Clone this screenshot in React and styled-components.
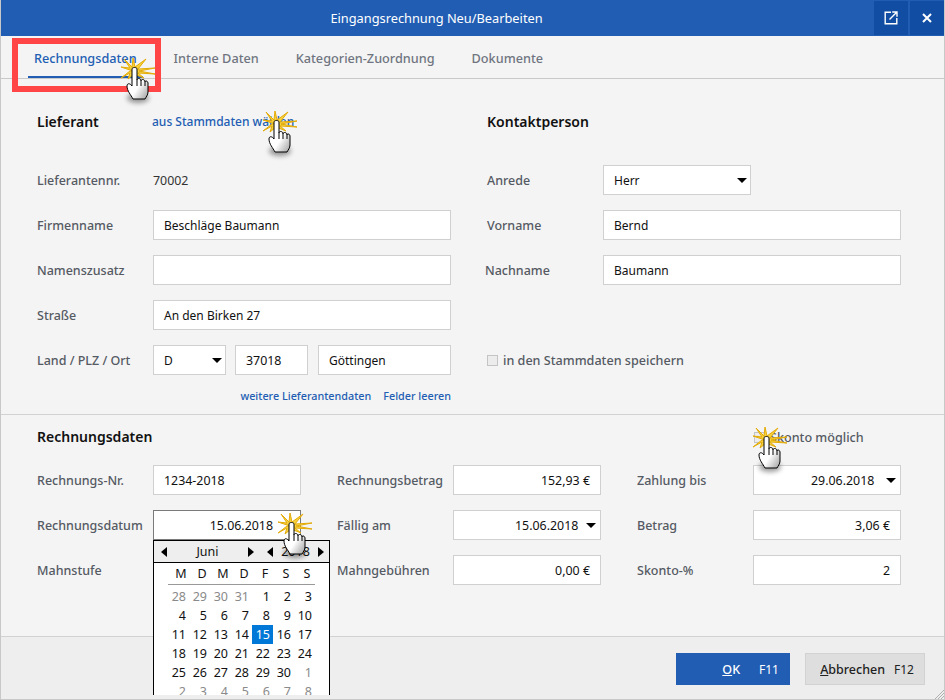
import React from 'react';
import styled, { createGlobalStyle } from 'styled-components';

const GlobalStyle = createGlobalStyle`
  html, body {
    margin: 0;
    padding: 0;
    background: #f4f4f4;
  }
  * {
    box-sizing: border-box;
  }
`;

const Window = styled.div`
  position: relative;
  width: 945px;
  height: 700px;
  overflow: hidden;
  display: flex;
  flex-direction: column;
  background: #f4f4f4;
  border-left: 1px solid #c8c8c8;
  border-right: 1px solid #c8c8c8;
  border-bottom: 1px solid #c8c8c8;
  font-family: "Noto Sans", "Open Sans", sans-serif;
  font-size: 12.5px;
  color: #1a1a1a;
`;

const TitleBar = styled.div`
  height: 36px;
  margin: 0 -1px;
  padding-right: 72px;
  flex: none;
  display: flex;
  align-items: center;
  justify-content: center;
  position: relative;
  background: #215db3;
  color: #fff;
  font-size: 12.8px;
`;

const TitleButtons = styled.div`
  position: absolute;
  right: 1px;
  top: 1px;
  display: flex;
  gap: 2px;
`;

const TitleButton = styled.div`
  width: 34px;
  height: 34px;
  display: flex;
  align-items: center;
  justify-content: center;
  background: #114ea3;
`;

const TabBar = styled.div`
  height: 43px;
  flex: none;
  display: flex;
  padding-left: 27px;
  gap: 25px;
  border-bottom: 1px solid #c9c9c9;
`;

const Tab = styled.div`
  height: 42px;
  padding: 13px 6px 0;
  margin-bottom: -1px;
  font-size: 12.7px;
  font-weight: 500;
  color: ${props => (props.$active ? '#215db3' : '#6f7480')};
  border-bottom: 2px solid ${props => (props.$active ? '#215db3' : 'transparent')};
`;

const TopSection = styled.div`
  height: 336px;
  flex: none;
  padding: 26px 0 0 36px;
  display: grid;
  grid-template-columns: 414px 414px;
  column-gap: 36px;
  border-bottom: 1px solid #d2d2d2;
`;

const FormColumn = styled.div`
  display: flex;
  flex-direction: column;
`;

const HeadingRow = styled.div`
  height: 32px;
  margin-bottom: 28px;
  display: flex;
  align-items: center;
`;

const Heading = styled.div`
  width: 115px;
  font-size: 14px;
  font-weight: 600;
  color: #111;
`;

const Row = styled.div`
  height: 30px;
  margin-bottom: 15px;
  display: flex;
  align-items: center;
`;

const Label = styled.div`
  width: ${props => 116 - (props.$shift || 0)}px;
  flex: none;
  color: #555a63;
  font-weight: 500;
  margin-left: ${props => props.$shift || 0}px;
  white-space: nowrap;
`;

const PlainValue = styled.div`
  color: #333;
  font-size: 12.4px;
`;

const TextLink = styled.div`
  color: #215db3;
  font-size: ${props => (props.$small ? '10.8px' : '12px')};
  font-weight: 500;
  white-space: nowrap;
`;

const Field = styled.div`
  width: ${props => props.$width || 148}px;
  height: 30px;
  flex: none;
  margin-right: ${props => props.$gap || 0}px;
  padding: 0 ${props => props.$padRight || 10}px 0 10px;
  display: flex;
  align-items: center;
  justify-content: ${props => (props.$right ? 'flex-end' : 'flex-start')};
  background: #fff;
  border: 1px solid ${props => (props.$focus ? '#7a7a7a' : '#d0d0d0')};
  color: #111;
  font-size: ${props => (props.$num ? '12.4px' : '12px')};
  white-space: nowrap;
`;

const Arrow = styled.span`
  width: 0;
  height: 0;
  margin-left: auto;
  border-left: 5px solid transparent;
  border-right: 5px solid transparent;
  border-top: 5px solid #000;
`;

const SelectValue = styled.span`
  margin-left: ${props => (props.$indent ? `${props.$indent}px` : 0)};
`;

const LinkRow = styled.div`
  display: flex;
  justify-content: flex-end;
  align-items: center;
  gap: 12px;
  margin-top: -2px;
`;

const CheckRow = styled.div`
  height: 30px;
  display: flex;
  align-items: center;
  gap: 5px;
  color: #555a63;
  font-size: 12.6px;
  font-weight: 500;
`;

const CheckBox = styled.span`
  width: 11px;
  height: 11px;
  background: #ececec;
  border: 1px solid #c4c4c4;
`;

const InvoiceSection = styled.div`
  height: 221px;
  flex: none;
  padding: 8px 0 0 36px;
`;

const InvoiceHead = styled.div`
  height: 26px;
  margin-bottom: 16px;
  display: flex;
  align-items: center;
  justify-content: space-between;
`;

const SkontoCheck = styled(CheckRow)`
  width: 148px;
  margin-right: 43px;
  margin-top: 2px;
  padding-left: 1px;
`;

const InvoiceGrid = styled.div`
  display: grid;
  grid-template-columns: 264px 264px 264px;
  column-gap: 36px;
`;

const Footer = styled.div`
  flex: 1;
  display: flex;
  align-items: flex-start;
  justify-content: flex-end;
  gap: 15px;
  padding: 16px 19px 0 0;
  background: #eeeeee;
  border-top: 1px solid #d2d2d2;
`;

const OkButton = styled.div`
  width: 114px;
  height: 32px;
  display: flex;
  align-items: center;
  justify-content: flex-end;
  gap: 19px;
  padding-right: 11px;
  background: #215db3;
  color: #fff;
  font-size: 12.5px;
  font-weight: 500;
`;

const CancelButton = styled.div`
  width: 120px;
  height: 32px;
  display: flex;
  align-items: center;
  justify-content: flex-end;
  gap: 9px;
  padding-right: 10px;
  background: #dedede;
  border: 1px solid #d2d2d2;
  color: #222;
  font-size: 12.5px;
  font-weight: 500;
`;

const Hotkey = styled.span`
  font-size: 12px;
  font-weight: 400;
`;

const ResizeGrip = styled.svg`
  position: absolute;
  right: 0;
  bottom: 0;
`;

const Calendar = styled.div`
  position: absolute;
  left: 152px;
  top: 540px;
  width: 177px;
  height: 155px;
  overflow: hidden;
  background: #fff;
  border: 1px solid #000;
  border-bottom: none;
  color: #111;
  font-size: 12.5px;
`;

const CalendarHead = styled.div`
  height: 22px;
  display: flex;
  align-items: center;
  padding-left: 7px;
  background: #eeeeee;
  border-bottom: 1px solid #000;
`;

const HeadText = styled.span`
  width: ${props => props.$width}px;
  text-align: center;
`;

const NavArrow = styled.span`
  width: 0;
  height: 0;
  margin-left: ${props => props.$offset || 0}px;
  border-top: 5px solid transparent;
  border-bottom: 5px solid transparent;
  border-left: ${props => (props.$dir === 'right' ? '6px solid #000' : 'none')};
  border-right: ${props => (props.$dir === 'left' ? '6px solid #000' : 'none')};
`;

const Weekdays = styled.div`
  margin: 0 14px;
  height: 22px;
  display: grid;
  grid-template-columns: repeat(7, 21px);
  align-items: center;
  border-bottom: 1px solid #999;
`;

const WeekdayCell = styled.span`
  padding-left: 5px;
  text-align: center;
`;

const DayGrid = styled.div`
  margin: 2px 14px 0;
  display: grid;
  grid-template-columns: repeat(7, 21px);
  grid-auto-rows: 19px;
`;

const DayCell = styled.span`
  padding-right: 3px;
  text-align: right;
  line-height: 19px;
  color: ${props => (props.$selected ? '#fff' : props.$muted ? '#8a8a8a' : '#111')};
  background: ${props => (props.$selected ? '#0078d7' : 'transparent')};
`;

const CursorMark = styled.svg`
  position: absolute;
  left: ${props => props.$x}px;
  top: ${props => props.$y}px;
  overflow: visible;
  pointer-events: none;
`;

const CursorShadow = styled.ellipse`
  fill: #000;
  opacity: 0.4;
  filter: blur(2.5px);
`;

const RedFrame = styled.div`
  position: absolute;
  left: 11px;
  top: 38px;
  width: 149px;
  height: 54px;
  border: 6px solid #ff4545;
  pointer-events: none;
`;

const weekdays = ['M', 'D', 'M', 'D', 'F', 'S', 'S'];

const days = [
  [28, true], [29, true], [30, true], [31, true], [1], [2], [3],
  [4], [5], [6], [7], [8], [9], [10],
  [11], [12], [13], [14], [15], [16], [17],
  [18], [19], [20], [21], [22], [23], [24],
  [25], [26], [27], [28], [29], [30], [1, true],
  [2, true], [3, true], [4, true], [5, true], [6, true], [7, true], [8, true],
];

// Klick-Markierung: Stern + Hand, Ursprung ist die Sternmitte
const ClickCursor = ({ x, y }) => (
  <CursorMark $x={x - 1} $y={y} width="1" height="1">
    <defs>
      <linearGradient id="handFill" x1="0.2" y1="0.4" x2="0.8" y2="1">
        <stop offset="0.45" stopColor="#ffffff" />
        <stop offset="1" stopColor="#b4b4b4" />
      </linearGradient>
    </defs>
    <path
      d="M0 0 L-12 -4 L-3 -3 L-9 -12 L-1 -4 L0 -13 L2 -4 L13 -12 L5 -2 L22 -3 L6 0 L22 3 L5 2 L11 7 L1 3 L-5 8 L-3 2 L-12 7 L-3 0 Z"
      fill="#f7d23c"
      stroke="#e3ab0a"
      strokeWidth="1"
      strokeLinejoin="miter"
    />
    <CursorShadow cx="5" cy="27" rx="11" ry="5" />
    <path
      d="M-1 -2 C-1 -4 4 -4 4 -2 L4 9 C4 7 7 7 8 9 L8 10 C8 8 11 8 12 10 L12 11 C12 9 15 10 15 12 L15 21 C15 24 13 26 12 28 L0 28 C-2 24 -6 20 -6 15 C-6 12 -3 12 -1 15 Z"
      fill="url(#handFill)"
      stroke="#000"
      strokeWidth="1"
      strokeLinejoin="round"
    />
    <path d="M4 9 L4 15 M8 10 L8 15 M12 11 L12 15" stroke="#000" strokeWidth="1" fill="none" />
  </CursorMark>
);

const Dropdown = ({ value, width, indent, gap }) => (
  <Field $width={width} $gap={gap} $padRight={indent ? 4 : 3} $num={!!indent}>
    <SelectValue $indent={indent}>{value}</SelectValue>
    <Arrow />
  </Field>
);

const App = () => (
  <>
    <GlobalStyle />
    <Window>
      <TitleBar>
        Eingangsrechnung Neu/Bearbeiten
        <TitleButtons>
          <TitleButton>
            <svg width="14" height="14" viewBox="0 0 14 14" fill="none" stroke="#fff" strokeWidth="1.4">
              <path d="M7 1.2 H1.2 V12.8 H12.8 V7" />
              <path d="M5.5 8.5 L12.2 1.8 M8.2 1 H13 V5.8" />
            </svg>
          </TitleButton>
          <TitleButton>
            <svg width="10" height="10" viewBox="0 0 10 10" fill="none" stroke="#fff" strokeWidth="2">
              <path d="M1 1 L9 9 M9 1 L1 9" />
            </svg>
          </TitleButton>
        </TitleButtons>
      </TitleBar>

      <TabBar>
        <Tab $active>Rechnungsdaten</Tab>
        <Tab>Interne Daten</Tab>
        <Tab>Kategorien-Zuordnung</Tab>
        <Tab>Dokumente</Tab>
      </TabBar>

      <TopSection>
        <FormColumn>
          <HeadingRow>
            <Heading>Lieferant</Heading>
            <TextLink>aus Stammdaten wählen</TextLink>
          </HeadingRow>
          <Row>
            <Label>Lieferantennr.</Label>
            <PlainValue>70002</PlainValue>
          </Row>
          <Row>
            <Label>Firmenname</Label>
            <Field $width={298}>Beschläge Baumann</Field>
          </Row>
          <Row>
            <Label>Namenszusatz</Label>
            <Field $width={298} />
          </Row>
          <Row>
            <Label>Straße</Label>
            <Field $width={298}>An den Birken 27</Field>
          </Row>
          <Row>
            <Label>Land / PLZ / Ort</Label>
            <Dropdown value="D" width={73} gap={9} />
            <Field $width={73} $gap={10} $num>37018</Field>
            <Field $width={133}>Göttingen</Field>
          </Row>
          <LinkRow>
            <TextLink $small>weitere Lieferantendaten</TextLink>
            <TextLink $small>Felder leeren</TextLink>
          </LinkRow>
        </FormColumn>

        <FormColumn>
          <HeadingRow>
            <Heading>Kontaktperson</Heading>
          </HeadingRow>
          <Row>
            <Label>Anrede</Label>
            <Dropdown value="Herr" />
          </Row>
          <Row>
            <Label>Vorname</Label>
            <Field $width={298}>Bernd</Field>
          </Row>
          <Row>
            <Label $shift={-2}>Nachname</Label>
            <Field $width={298}>Baumann</Field>
          </Row>
          <Row />
          <CheckRow>
            <CheckBox />
            in den Stammdaten speichern
          </CheckRow>
        </FormColumn>
      </TopSection>

      <InvoiceSection>
        <InvoiceHead>
          <Heading>Rechnungsdaten</Heading>
          <SkontoCheck>
            <CheckBox />
            Skonto möglich
          </SkontoCheck>
        </InvoiceHead>
        <InvoiceGrid>
          <Row>
            <Label>Rechnungs-Nr.</Label>
            <Field $num>1234-2018</Field>
          </Row>
          <Row>
            <Label>Rechnungsbetrag</Label>
            <Field $right $num>152,93 €</Field>
          </Row>
          <Row>
            <Label>Zahlung bis</Label>
            <Dropdown value="29.06.2018" indent={47} />
          </Row>
          <Row>
            <Label>Rechnungsdatum</Label>
            <Field $right $num $focus $padRight={27}>15.06.2018</Field>
          </Row>
          <Row>
            <Label>Fällig am</Label>
            <Dropdown value="15.06.2018" indent={51} />
          </Row>
          <Row>
            <Label>Betrag</Label>
            <Field $right $num>3,06 €</Field>
          </Row>
          <Row>
            <Label>Mahnstufe</Label>
          </Row>
          <Row>
            <Label>Mahngebühren</Label>
            <Field $right $num>0,00 €</Field>
          </Row>
          <Row>
            <Label>Skonto-%</Label>
            <Field $right $num>2</Field>
          </Row>
        </InvoiceGrid>
      </InvoiceSection>

      <Footer>
        <OkButton>
          <span><u>O</u>K</span>
          <Hotkey>F11</Hotkey>
        </OkButton>
        <CancelButton>
          <span><u>A</u>bbrechen</span>
          <Hotkey>F12</Hotkey>
        </CancelButton>
      </Footer>
      <ResizeGrip width="10" height="10" viewBox="0 0 10 10" stroke="#b0b0b0">
        <path d="M10 1 L1 10 M10 4 L4 10 M10 7 L7 10" />
      </ResizeGrip>

      <Calendar>
        <CalendarHead>
          <NavArrow $dir="left" />
          <HeadText $width={81}>Juni</HeadText>
          <NavArrow $dir="right" />
          <NavArrow $dir="left" $offset={13} />
          <HeadText $width={45}>2018</HeadText>
          <NavArrow $dir="right" />
        </CalendarHead>
        <Weekdays>
          {weekdays.map((day, i) => (
            <WeekdayCell key={i}>{day}</WeekdayCell>
          ))}
        </Weekdays>
        <DayGrid>
          {days.map(([day, muted], i) => (
            <DayCell key={i} $muted={muted} $selected={i === 18}>{day}</DayCell>
          ))}
        </DayGrid>
      </Calendar>

      <RedFrame />
      <ClickCursor x={133} y={71} />
      <ClickCursor x={275} y={124} />
      <ClickCursor x={765} y={440} />
      <ClickCursor x={290} y={526} />
    </Window>
  </>
);

export default App;
